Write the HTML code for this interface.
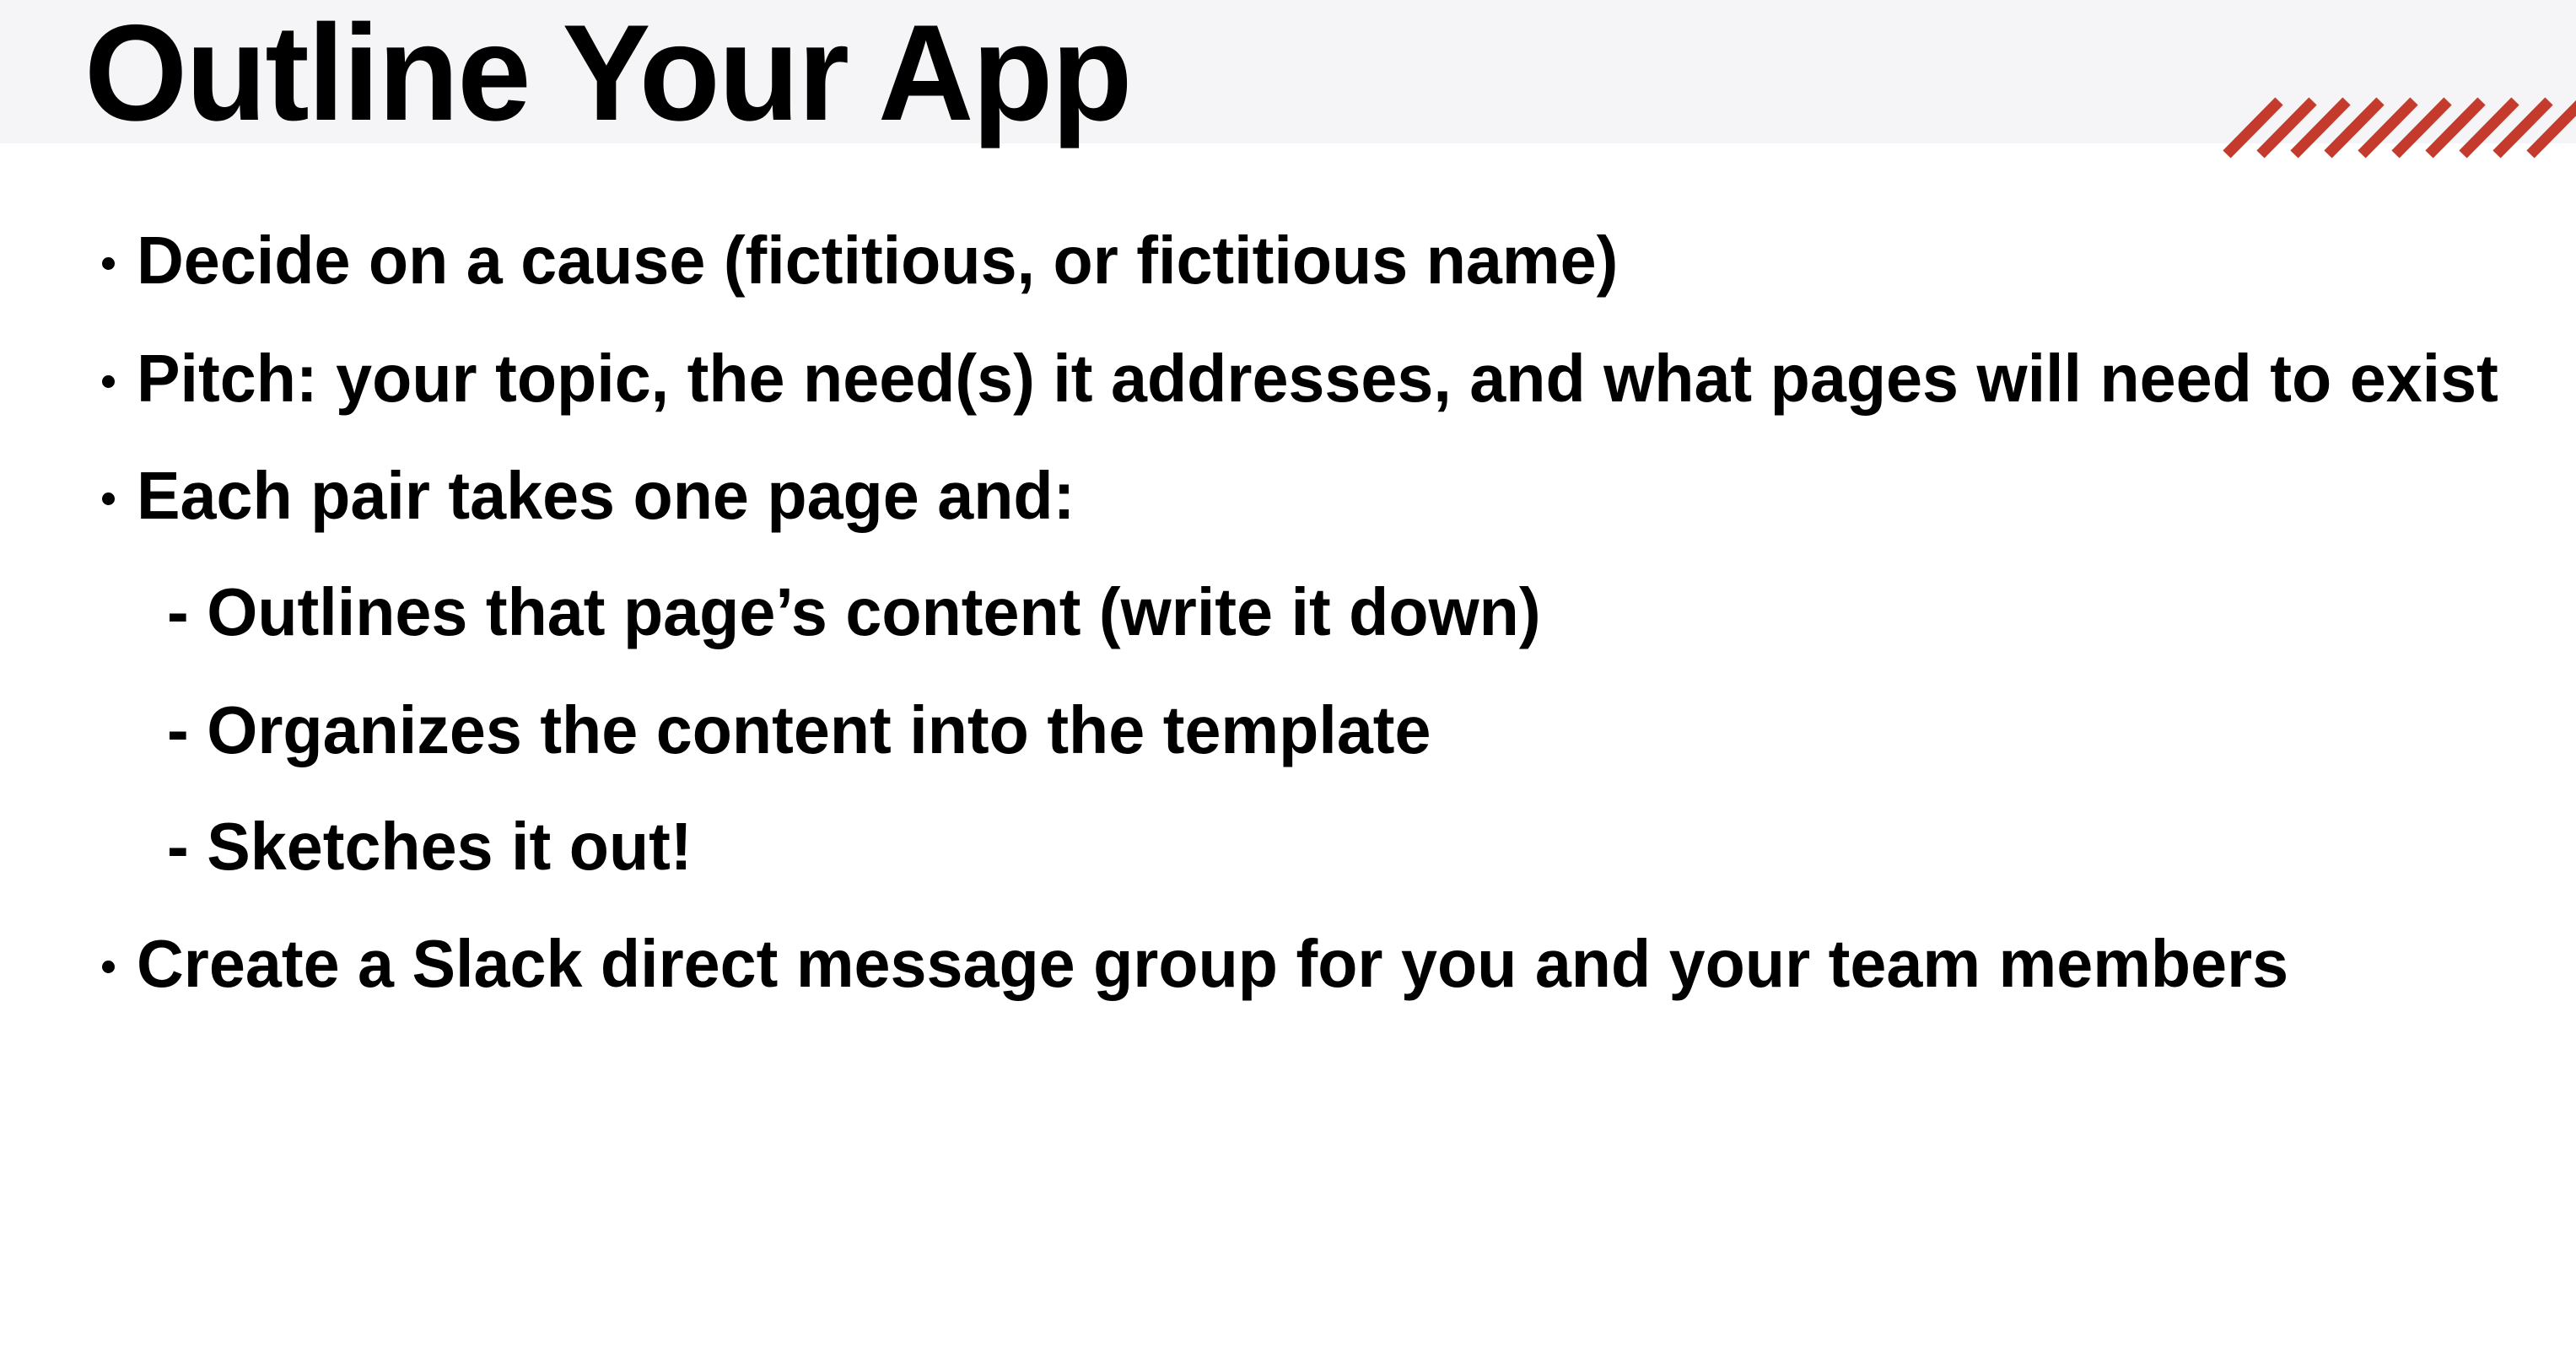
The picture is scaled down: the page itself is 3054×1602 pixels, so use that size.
<!DOCTYPE html>
<html><head><style>
html,body{margin:0;padding:0;width:3054px;height:1602px;overflow:hidden;background:#fff;font-family:"Liberation Sans",Arial,sans-serif;}
.hdr{position:absolute;left:0;top:0;width:3054px;height:170px;background:#f5f4f6;}
.title{position:absolute;left:100px;top:-8px;font-size:162px;font-weight:bold;line-height:190px;color:#000;letter-spacing:-2px;transform:scaleX(0.97);transform-origin:0 0;}
.l{position:absolute;font-size:80px;font-weight:bold;color:#000;white-space:nowrap;line-height:1;transform:scaleX(0.966);transform-origin:0 0;}
.dot{position:absolute;width:15px;height:15px;border-radius:50%;background:#000;}
</style></head><body>
<div class="hdr"></div>
<div class="title">Outline Your App</div>
<svg style="position:absolute;left:0;top:0" width="3054" height="200">
<g stroke="#c43a2c" stroke-width="13" stroke-linecap="butt">
<line x1="2640" y1="183" x2="2702" y2="120"/>
<line x1="2680" y1="183" x2="2742" y2="120"/>
<line x1="2720" y1="183" x2="2782" y2="120"/>
<line x1="2760" y1="183" x2="2822" y2="120"/>
<line x1="2800" y1="183" x2="2862" y2="120"/>
<line x1="2840" y1="183" x2="2902" y2="120"/>
<line x1="2880" y1="183" x2="2942" y2="120"/>
<line x1="2920" y1="183" x2="2982" y2="120"/>
<line x1="2960" y1="183" x2="3022" y2="120"/>
<line x1="3000" y1="183" x2="3062" y2="120"/>
</g></svg>
<div class="dot" style="left:121px;top:305px"></div>
<div class="l" style="left:162px;top:269px">Decide on a cause (fictitious, or fictitious name)</div>
<div class="dot" style="left:121px;top:445px"></div>
<div class="l" style="left:162px;top:409px">Pitch: your topic, the need(s) it addresses, and what pages will need to exist</div>
<div class="dot" style="left:121px;top:584px"></div>
<div class="l" style="left:162px;top:548px">Each pair takes one page and:</div>
<div class="l" style="left:198px;top:686px">- Outlines that page’s content (write it down)</div>
<div class="l" style="left:198px;top:826px">- Organizes the content into the template</div>
<div class="l" style="left:198px;top:964px">- Sketches it out!</div>
<div class="dot" style="left:121px;top:1139px"></div>
<div class="l" style="left:162px;top:1103px">Create a Slack direct message group for you and your team members</div>
</body></html>
